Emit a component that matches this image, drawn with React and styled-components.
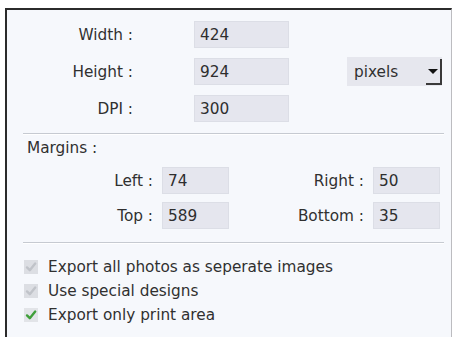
import React from 'react'
import styled, { createGlobalStyle } from 'styled-components'

const GlobalStyle = createGlobalStyle`
  html, body {
    margin: 0;
    padding: 0;
    background: #ffffff;
    overflow: hidden;
  }
  body {
    font-family: 'DejaVu Sans', Verdana, sans-serif;
  }
`

const sizeRows = [
  { label: 'Width :', value: '424' },
  { label: 'Height :', value: '924', unit: true },
  { label: 'DPI :', value: '300' },
]

const marginRows = [
  { left: ['Left :', '74'], right: ['Right :', '50'] },
  { left: ['Top :', '589'], right: ['Bottom :', '35'] },
]

const options = [
  { text: 'Export all photos as seperate images', checked: true, disabled: true },
  { text: 'Use special designs', checked: true, disabled: true },
  { text: 'Export only print area', checked: true, disabled: false },
]

const CheckMark = ({ color }) => (
  <svg width="12" height="12" viewBox="0 0 12 12">
    <path
      d="M2 6.4 L4.8 9.2 L10.2 2.6"
      fill="none"
      stroke={color}
      strokeWidth="2.4"
      strokeLinecap="round"
      strokeLinejoin="round"
    />
  </svg>
)

const App = () => {
  return (
    <>
      <GlobalStyle />
      <Frame>
        <SizeGrid>
          {sizeRows.map((row) => (
            <React.Fragment key={row.label}>
              <SizeLabel>{row.label}</SizeLabel>
              <Field $w={95}>{row.value}</Field>
              <UnitCell>
                {row.unit && (
                  <Select>
                    <span>pixels</span>
                    <DropButton>
                      <Arrow />
                    </DropButton>
                  </Select>
                )}
              </UnitCell>
            </React.Fragment>
          ))}
        </SizeGrid>

        <Separator $top={11} />

        <SectionTitle>Margins :</SectionTitle>
        <MarginGrid>
          {marginRows.map((row) => (
            <React.Fragment key={row.left[0]}>
              <MarginLabel>{row.left[0]}</MarginLabel>
              <Field $w={67}>{row.left[1]}</Field>
              <MarginLabel>{row.right[0]}</MarginLabel>
              <Field $w={67}>{row.right[1]}</Field>
            </React.Fragment>
          ))}
        </MarginGrid>

        <Separator $top={13} />

        <Options>
          {options.map((opt) => (
            <Option key={opt.text}>
              <Box $disabled={opt.disabled}>
                {opt.checked && (
                  <CheckMark color={opt.disabled ? '#c0c3c9' : '#3f9f3a'} />
                )}
              </Box>
              {opt.text}
            </Option>
          ))}
        </Options>
      </Frame>
    </>
  )
}

export default App

const Frame = styled.div`
  margin: 8px 0 0 5px;
  width: 444px;
  height: 316px;
  overflow: hidden;
  background: #f6f8fc;
  border-top: 2px solid #2b2b2b;
  border-left: 2px solid #2b2b2b;
  border-right: 1px solid #bcbcc0;
  box-sizing: content-box;
  color: #303030;
  font-size: 15.3px;
  padding-top: 11px;
`

const SizeGrid = styled.div`
  display: grid;
  grid-template-columns: 187px 95px 1fr;
  grid-auto-rows: 27px;
  row-gap: 10px;
`

const SizeLabel = styled.div`
  display: flex;
  align-items: center;
  justify-content: flex-end;
  padding-right: 61px;
`

const Field = styled.div`
  width: ${(p) => p.$w}px;
  height: 27px;
  box-sizing: border-box;
  background: #e5e6ee;
  border: 1px solid #dcdee6;
  padding-left: 5px;
  display: flex;
  align-items: center;
  color: #2e2e2e;
`

const UnitCell = styled.div`
  display: flex;
  justify-content: flex-end;
  padding-right: 9px;
`

const Select = styled.div`
  width: 95px;
  height: 29px;
  margin-top: -1px;
  box-sizing: border-box;
  background: #e6e7ee;
  display: flex;
  align-items: center;
  justify-content: space-between;
  padding-left: 7px;
`

const DropButton = styled.div`
  width: 16px;
  height: 26px;
  align-self: flex-end;
  margin-bottom: 1px;
  box-sizing: border-box;
  border-right: 2px solid #3a3a3a;
  border-bottom: 2px solid #3a3a3a;
  display: flex;
  align-items: center;
  justify-content: center;
`

const Arrow = styled.div`
  width: 0;
  height: 0;
  border-left: 5px solid transparent;
  border-right: 5px solid transparent;
  border-top: 5px solid #111;
`

const Separator = styled.div`
  margin: ${(p) => p.$top}px 7px 0 16px;
  height: 1px;
  background: #c6cad1;
  border-bottom: 1px solid #ffffff;
`

const SectionTitle = styled.div`
  padding-left: 20px;
  margin-top: 4px;
  line-height: 18px;
`

const MarginGrid = styled.div`
  display: grid;
  grid-template-columns: 155px 67px 144px 67px;
  grid-auto-rows: 27px;
  row-gap: 8px;
  margin-top: 10px;
`

const MarginLabel = styled.div`
  display: flex;
  align-items: center;
  justify-content: flex-end;
  padding-right: 9px;
`

const Options = styled.div`
  display: flex;
  flex-direction: column;
  margin-top: 11px;
  padding-left: 17px;
`

const Option = styled.div`
  display: flex;
  align-items: center;
  height: 24px;
  gap: 10px;
`

const Box = styled.div`
  width: 14px;
  height: 14px;
  background: ${(p) => (p.$disabled ? '#dcdee3' : '#e2e4e8')};
  display: flex;
  align-items: center;
  justify-content: center;
`
